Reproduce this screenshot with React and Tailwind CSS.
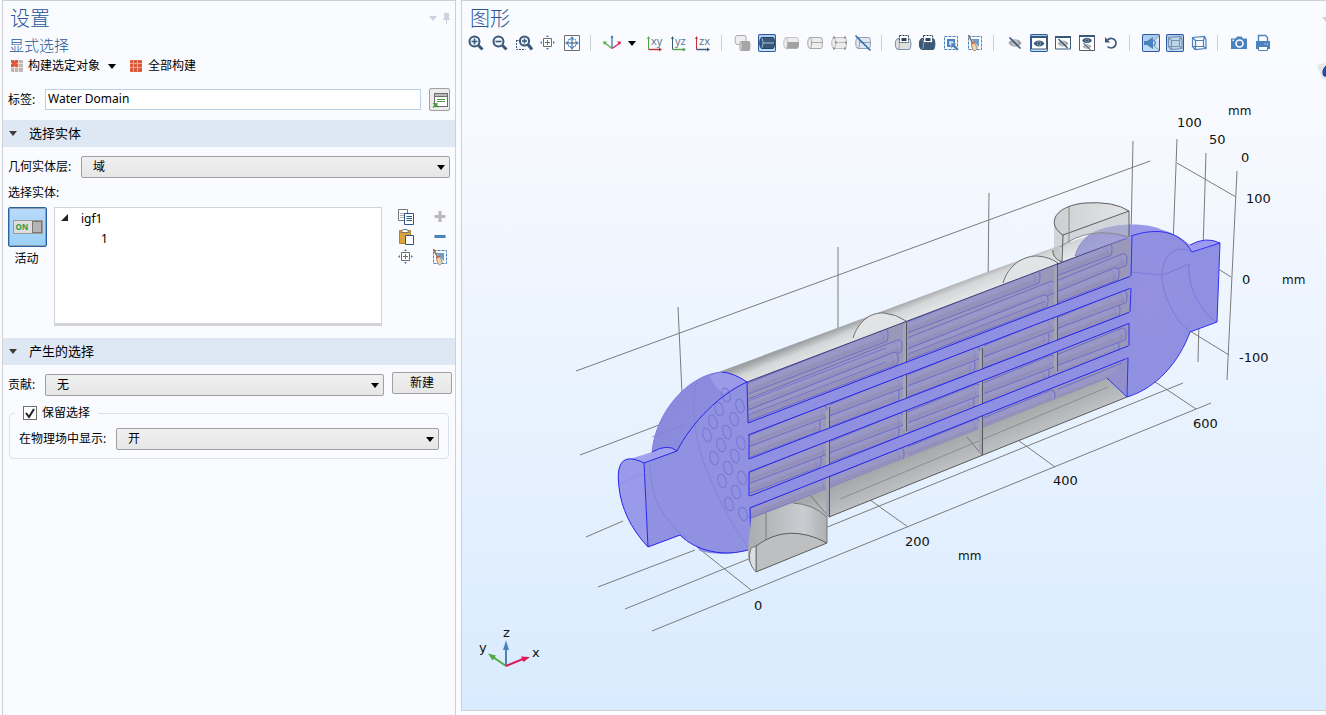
import { useState } from "react";

const NAVY = "#3a5878";
const BLUE = "#4a82bd";

function Svg({ children, size = 18, ...rest }) {
  return (
    <svg width={size} height={size} viewBox="0 0 18 18" fill="none" aria-hidden="true" {...rest}>
      {children}
    </svg>
  );
}

function Caret({ className = "text-black" }) {
  return (
    <svg width="8" height="5" viewBox="0 0 8 5" className={className} aria-hidden="true">
      <path d="M0 0h8L4 5z" fill="currentColor" />
    </svg>
  );
}

// ---------- icons ----------

function MeshIcon({ partial }) {
  return (
    <svg width="12" height="12" viewBox="0 0 12 12" aria-hidden="true">
      <rect width="12" height="12" rx="1" fill={partial ? "#b9b9b9" : "#dc5a3c"} />
      {partial && <rect width="7" height="7" fill="#e0583c" />}
      <path d="M3.500 0v12M7.500 0v12M0 3.500h12M0 7.500h12" stroke={partial ? "#f4dcd6" : "#f3a48f"} />
      {partial && <path d="M1 1h5v5H1z" fill="#e0583c" />}
    </svg>
  );
}

function GoToIcon() {
  return (
    <Svg>
      <rect x="3.500" y="2.500" width="13" height="13" fill="#fff" stroke="#6c6c6c" />
      <path d="M4 3h12v2.500H4z" fill="#b8b8b8" />
      <path d="M3.500 5.500h13" stroke="#6c6c6c" />
      <path d="M6 8.500h8M6 10.500h8" stroke="#4b9b3f" />
      <path d="M1.500 12h5v5l-2-2-2 2-1-1 2-2z" fill="#4b9b3f" />
    </Svg>
  );
}

function Lens() {
  return (
    <>
      <circle cx="7.500" cy="7.500" r="5" stroke={NAVY} strokeWidth="2" fill="#eef4fb" />
      <path d="M11.500 11.500l4 4" stroke={NAVY} strokeWidth="3" />
    </>
  );
}

const ZoomInIcon = () => (
  <Svg><Lens /><path d="M4.500 7.500h6M7.500 4.500v6" stroke={NAVY} strokeWidth="1.600" /></Svg>
);

const ZoomOutIcon = () => (
  <Svg><Lens /><path d="M4.500 7.500h6" stroke={NAVY} strokeWidth="1.600" /></Svg>
);

const ZoomBoxIcon = () => (
  <Svg>
    <path d="M1.500 6v9.500h9M1.500 6.500h3" stroke={NAVY} strokeDasharray="2 1" />
    <circle cx="9.500" cy="7" r="4.600" stroke={NAVY} strokeWidth="2" fill="#eef4fb" />
    <path d="M7 7h5M9.500 4.500v5" stroke={NAVY} strokeWidth="1.400" />
    <path d="M13 10.500l4 5" stroke={NAVY} strokeWidth="3" />
  </Svg>
);

const ZoomSelIcon = () => (
  <Svg>
    <path d="M4.500 4.500h8v8h-8z" stroke="#6e6e6e" fill="#fff" />
    <path d="M6 8.500h5M8.500 6v5" stroke="#6e6e6e" />
    <path d="M7 3l1.500-2L10 3zM7 14l1.500 2 1.500-2zM3 7L1 8.500 3 10zM14 7l2 1.500-2 1.500z" fill={BLUE} />
  </Svg>
);

const ZoomExtentsIcon = () => (
  <Svg>
    <path d="M1.500 1.500h15v15h-15z" stroke="#6e6e6e" />
    <path d="M5.500 5.500h7v7h-7z" stroke={BLUE} strokeDasharray="2 1" />
    <path d="M6 9h6M9 6v6" stroke={NAVY} />
    <path d="M7 5l2-3 2 3zM7 13l2 3 2-3zM5 7L2 9l3 2zM13 7l3 2-3 2z" fill={BLUE} />
  </Svg>
);

const AxesIcon = () => (
  <Svg>
    <path d="M9 2v12" stroke="#4a82bd" strokeWidth="1.400" />
    <path d="M7.500 4L9 1l1.500 3z" fill="#4a82bd" />
    <path d="M9 14.500L2 9" stroke="#56ae48" strokeWidth="1.400" />
    <path d="M0 7.500h4L1 11z" fill="#56ae48" />
    <path d="M9 14.500L17 9" stroke="#dd1c5b" strokeWidth="1.400" />
    <path d="M18 7.500h-4l3 3.500z" fill="#dd1c5b" />
  </Svg>
);

function PlaneIcon({ name, v, h }) {
  return (
    <Svg>
      <path d="M2.500 3v12.500" stroke={v} />
      <path d="M1 5l1.500-3L4 5z" fill={v} />
      <path d="M2.500 15.500H14" stroke={h} strokeWidth="1.400" />
      <path d="M13 13.500l3 2-3 2z" fill={h} />
      <text x="5" y="11" fontSize="11" fill="#56718f" fontFamily="Open Sans, sans-serif">{name}</text>
    </Svg>
  );
}

// small lying cylinder, the base of the rendering icons
function Barrel({ fill = "#ececec", stroke = "#a9a9a9", children }) {
  return (
    <>
      <path d="M4 3.500h11c2 0 2 11 0 11H4c-3 0-3-11 0-11z" fill={fill} stroke={stroke} />
      <path d="M4 3.500c2 0 2 11 0 11" stroke={stroke} />
      {children}
    </>
  );
}

const OverlapIcon = () => (
  <Svg>
    <path d="M3 1.500h8c1.500 0 1.500 9 0 9H3c-2.500 0-2.500-9 0-9z" fill="#eee" stroke="#a9a9a9" />
    <path d="M7 7h8c2 0 2 10 0 10H7c-2.500 0-2.500-10 0-10z" fill="#a6a6a6" />
    <ellipse cx="6.500" cy="12" rx="1.300" ry="4.500" fill="#c9c9c9" />
  </Svg>
);

const SolidIcon = () => (
  <Svg>
    <Barrel fill={NAVY} stroke="#24466e"><path d="M5 9h11" stroke="#a8c4e4" /><path d="M3.500 4c2 1 2 9 0 10" stroke="#a8c4e4" /></Barrel>
  </Svg>
);

const HalfIcon = () => (
  <Svg><Barrel stroke="#c3c3c3" /><path d="M5.500 8h11.500c0 4-.500 6.500-2 6.500H4c1.500 0 1.700-3 1.500-6.500z" fill="#a2a2a2" /></Svg>
);

const WireIcon = () => <Svg><Barrel><path d="M5.500 8.500H16" stroke="#a9a9a9" /></Barrel></Svg>;

const PointsIcon = () => (
  <Svg>
    <Barrel stroke="#bcbcbc"><path d="M5.500 8.500H16" stroke="#bcbcbc" /></Barrel>
    <path d="M3 2.500h2v2H3zM14 2.500h2v2h-2zM3 13.500h2v2H3zM14 13.500h2v2h-2zM5 7.500h2v2H5zM15 7.500h2v2h-2z" fill="#929292" />
  </Svg>
);

const NoWireIcon = () => (
  <Svg>
    <Barrel fill="#e3e7ed" stroke="#91a3ba"><path d="M5.500 8.500H16" stroke="#91a3ba" /></Barrel>
    <path d="M1.500 1.500l15 15" stroke="#2169ad" strokeWidth="1.500" />
  </Svg>
);

function PickIcon({ fill, stroke }) {
  return (
    <Svg>
      <path d="M4 4.500h11c2.500 0 2.500 11 0 11H4c-3.500 0-3.500-11 0-11z" fill={fill} stroke={stroke} />
      <path d="M4 5c2 0 2 10 0 10" stroke="#93a6bd" />
      <path d="M5.500 1.500h9v7h-9z" fill="#fff" stroke="#31455f" strokeDasharray="2 1" />
      <path d="M7.500 4h5v3h-5z" fill="#31455f" />
    </Svg>
  );
}

const SelectBoxIcon = () => (
  <Svg>
    <path d="M2.500 2.500h13v13h-13z" stroke={BLUE} strokeDasharray="3 1" />
    <path d="M6 6h6v6H6z" fill="#bcd3ea" stroke={BLUE} strokeWidth="2" />
    <path d="M9 9h6l-2 2 4 4-2 2-4-4-2 2z" fill={BLUE} stroke="#fff" strokeWidth=".500" />
  </Svg>
);

const BroomIcon = () => (
  <Svg>
    <path d="M2.500 2.500h13v13h-13z" stroke={BLUE} strokeDasharray="3 1" />
    <path d="M5 5h8v8z" fill="#6f9ccc" />
    <path d="M2.500 1l4.500 9" stroke="#8d6c4c" strokeWidth="1.600" />
    <path d="M5.500 9.500l2.500-1.500 3 5c.500 2-1 3.500-2.500 4-2-1.500-3-4-3-7.500z" fill="#f0d3ae" stroke="#977452" strokeWidth=".800" />
    <path d="M5.500 10l3-2" stroke="#cc5236" strokeWidth="1.400" />
  </Svg>
);

function Eye({ y = 9, color = NAVY, slash, s = 1 }) {
  return (
    <g transform={`translate(9 ${y}) scale(${s})`}>
      <path d="M-6 0C-3.500-4.500 3.500-4.500 6 0 3.500 4.500-3.500 4.500-6 0z" fill={color} />
      <circle r="2.400" fill="#fff" opacity=".500" />
      <circle r="1.600" fill={color} />
      {slash && <path d="M-5-5L5 5" stroke={NAVY} strokeWidth="1.500" />}
    </g>
  );
}

const HiddenIcon = () => <Svg><Eye color="#a3a7ac" slash s={1.100} /></Svg>;

function EyeWindow({ children }) {
  return (
    <Svg>
      <path d="M1.500 2.500h15v12.500h-15z" fill="#fff" stroke={NAVY} />
      <path d="M1 3h16" stroke={NAVY} strokeWidth="2" />
      {children}
    </Svg>
  );
}

const ShowOnlyIcon = () => <EyeWindow><Eye y={9.500} s={0.900} /></EyeWindow>;
const ShowHiddenIcon = () => <EyeWindow><Eye y={9.500} color="#aaa" slash s={0.900} /></EyeWindow>;
const ShowBothIcon = () => (
  <Svg>
    <path d="M1.500 1.500h15v15h-15z" fill="#fff" stroke="#5c5c66" />
    <path d="M1 2h16" stroke={NAVY} strokeWidth="2" />
    <Eye y={6.500} s={0.800} />
    <Eye y={12.500} color="#aaa" slash s={0.700} />
  </Svg>
);

const ResetIcon = () => (
  <Svg>
    <path d="M5 6.500c3.500-4 9-1.500 9 2.500 0 4.500-5 6.500-8.500 3.500" stroke={NAVY} strokeWidth="1.600" />
    <path d="M3 3v5.500h5z" fill={NAVY} />
  </Svg>
);

const LightIcon = () => (
  <Svg>
    <path d="M10 9l7-7v14z" fill="#cfe3f7" />
    <path d="M9 8.500L17 2M9 9.500l8 6.500" stroke="#9a9a9a" />
    <path d="M2 7h3l6-4v12l-6-4H2z" fill={BLUE} />
    <path d="M12 6.500c1.600 1 1.600 4 0 5" stroke={BLUE} strokeWidth="1.400" />
  </Svg>
);

function BoxIcon({ solid }) {
  return (
    <Svg>
      {solid && <path d="M3 4l11-1 2 2v9l-10 1-3-3z" fill="#c0d4ea" />}
      <path
        d="M5.500 6.500h8v6h-8zM2.500 3.500l12-1v0l1.500 3v9l-11 1-2.500-3zM2.500 3.500l3 3M14.500 2.500l-1 4M2.500 12.500l3 0M13.500 12.500l2.500 2M5.500 6.500V15"
        stroke={solid ? "#7993b2" : BLUE}
        strokeWidth="1.200"
      />
    </Svg>
  );
}

const CameraIcon = () => (
  <Svg>
    <path d="M1 4.500h4.500L7 2.500h4.500L13 4.500h4V15H1z" fill={BLUE} />
    <circle cx="9.500" cy="9.500" r="3.500" fill={BLUE} stroke="#fff" strokeWidth="1.600" />
    <path d="M2.500 5.500h1.500V7H2.500z" fill="#fff" />
  </Svg>
);

const PrinterIcon = () => (
  <Svg>
    <path d="M4.500 7V1.500h7l2 2V7" fill="#fff" stroke={BLUE} strokeWidth="1.400" />
    <path d="M2 7h14v8H2z" fill={BLUE} />
    <path d="M4.500 12.500h9v4h-9z" fill="#fff" stroke={BLUE} />
    <path d="M10.500 10h1M13 10h1" stroke="#fff" />
  </Svg>
);

const CopyIcon = () => (
  <Svg>
    <path d="M1.500 1.500h9v11h-9z" fill="#fff" stroke="#777" />
    <path d="M3 5.500h5M3 7.500h5M3 9.500h4" stroke="#aaa" />
    <path d="M7.500 5.500h9v11h-9z" fill="#fff" stroke="#2d5488" />
    <path d="M9.500 8.500H15M9.500 10.500H15M9.500 12.500H15" stroke="#2d5488" />
  </Svg>
);

const PasteIcon = () => (
  <Svg>
    <path d="M2.500 2.500h11v13h-11z" fill="#dba53e" stroke="#b5842e" />
    <path d="M4 4.500l2-3h4l2 3z" fill="#fff" stroke="#777" />
    <path d="M8.500 7.500h8v9h-8z" fill="#fff" stroke="#2d5488" />
  </Svg>
);

const PlusIcon = () => <Svg><path d="M3.500 8.500h11M9 3v11" stroke="#b9b9b9" strokeWidth="3" /></Svg>;
const MinusIcon = () => <Svg><path d="M3.500 8.500h11" stroke={BLUE} strokeWidth="3" /></Svg>;

function PinIcon() {
  return (
    <svg width="8" height="11" viewBox="0 0 8 11" aria-hidden="true">
      <path d="M1 0h5v6h1v1H4v4H3V7H0V6h1z" fill="#cdd2de" />
    </svg>
  );
}

// ---------- form parts ----------

function Select({ id, options, className = "" }) {
  return (
    <div className={`relative h-[22px] ${className}`}>
      <select
        id={id}
        className="h-full w-full appearance-none rounded-xs border border-[#a0a0a0] bg-linear-to-b from-[#f0f0f1] to-[#e6e6e6] pl-[11px] text-xs text-black"
      >
        {options.map((o) => (
          <option key={o}>{o}</option>
        ))}
      </select>
      <span className="pointer-events-none absolute inset-y-0 right-[5px] flex items-center">
        <Caret />
      </span>
    </div>
  );
}

function Section({ title, children }) {
  const [open, setOpen] = useState(true);
  return (
    <section>
      <button
        onClick={() => setOpen((prev) => !prev)}
        className="flex h-[27px] w-full items-center gap-3 bg-[#dee8f4] pl-1.5 text-left text-[13px]"
      >
        <Caret className="text-[#3c3c3c]" />
        <span>{title}</span>
      </button>
      {open && children}
    </section>
  );
}

function IconButton({ label, active, children }) {
  return (
    <button
      aria-label={label}
      className="flex h-[18px] w-6 shrink-0 items-center justify-center"
    >
      {active ? (
        <span className="flex h-[18px] w-[18px] items-center justify-center rounded-xs bg-linear-to-b from-[#a9c9ec] to-[#c4e2fb] ring-1 ring-[#2d5a9c] ring-inset">
          {children}
        </span>
      ) : (
        children
      )}
    </button>
  );
}

function Settings() {
  return (
    <aside className="w-[454px] shrink-0 border border-b-0 border-[#cfd0d6]">
      <header className="flex h-[34px] items-center justify-between pt-px pr-1 pl-[7px]">
        <h1 className="text-xl font-light text-[#2a5699]">设置</h1>
        <div className="flex items-center gap-1.5">
          <Caret className="text-[#cdd2de]" />
          <PinIcon />
        </div>
      </header>
      <h2 className="h-5 pl-1.5 text-[15px] leading-5 font-light text-[#2a5699]">显式选择</h2>

      <div className="flex h-[22px] items-center pl-2">
        <button className="flex items-center gap-[5px]">
          <MeshIcon partial />
          构建选定对象
        </button>
        <button aria-label="构建选项" className="px-2">
          <Caret />
        </button>
        <button className="ml-1.5 flex items-center gap-1.5">
          <MeshIcon />
          全部构建
        </button>
      </div>

      <div className="mt-[11px] mb-[9px] flex items-center px-[5px]">
        <label htmlFor="label" className="w-[37px] shrink-0">标签:</label>
        <input
          id="label"
          defaultValue="Water Domain"
          className="h-[21px] min-w-0 flex-1 border border-[#b9d1e6] bg-white px-[2px] pb-0.5 text-xs"
        />
        <button
          aria-label="转到源"
          className="ml-2 flex h-[23px] w-[21px] items-center justify-center rounded-xs border border-[#a0a0a0] bg-[#ececec]"
        >
          <GoToIcon />
        </button>
      </div>

      <Section title="选择实体">
        <div className="px-[5px] pt-[9px] pb-3">
          <div className="flex items-center">
            <label htmlFor="level" className="w-[73px] shrink-0">几何实体层:</label>
            <Select id="level" options={["域", "边界", "边", "点"]} className="flex-1" />
          </div>
          <p className="mt-1.5 mb-[5px] h-[18px] leading-[18px]">选择实体:</p>
          <div className="flex">
            <div className="flex w-[46px] shrink-0 flex-col">
              <button
                aria-label="活动"
                className="flex h-10 w-[39px] items-center justify-center rounded-xs border border-[#2b62a0] bg-linear-to-b from-[#b8dafa] to-[#9cd0f8] ring-1 ring-[#8d9fb3] ring-inset"
              >
                <span className="flex h-3.5 w-[30px] items-center justify-between border border-[#999] bg-[#dedede] pl-0.5 text-[8px] font-bold text-[#2f9a48]">
                  ON
                  <span className="h-full w-2.5 border border-[#777] bg-[#b4b4b4]" />
                </span>
              </button>
              <span className="w-[37px] pt-px text-center leading-[22px]">活动</span>
            </div>
            <ul className="h-[119px] flex-1 border border-b-3 border-[#d2d3d5] bg-white pt-px leading-5">
              <li className="flex items-center pl-1.5">
                <svg width="7" height="10" viewBox="0 0 7 10" aria-hidden="true">
                  <path d="M7 0v7H0z" fill="#222" />
                </svg>
                <span className="ml-[13px]">igf1</span>
              </li>
              <li className="pl-[46px]">1</li>
            </ul>
            <div className="ml-3 grid w-14 shrink-0 auto-rows-[20px] grid-cols-[34px_22px] items-center">
              <IconButton label="复制选择"><CopyIcon /></IconButton>
              <IconButton label="添加到选择"><PlusIcon /></IconButton>
              <IconButton label="粘贴选择"><PasteIcon /></IconButton>
              <IconButton label="从选择中移除"><MinusIcon /></IconButton>
              <IconButton label="缩放到选择"><ZoomSelIcon /></IconButton>
              <IconButton label="清除选择"><BroomIcon /></IconButton>
            </div>
          </div>
        </div>
      </Section>

      <Section title="产生的选择">
        <div className="pt-[7px] pr-[3px] pl-[5px]">
          <div className="flex">
            <label htmlFor="contrib" className="w-[37px] shrink-0 pt-[5px]">贡献:</label>
            <Select id="contrib" options={["无"]} className="mt-0.5 flex-1" />
            <button className="ml-2 h-[22px] w-[60px] rounded-xs border border-[#a0a0a0] bg-linear-to-b from-[#f0f0f1] to-[#e6e6e6]">
              新建
            </button>
          </div>
          <fieldset className="mt-[7px] mr-[3px] ml-px rounded-sm border border-[#d8e2ea] px-[9px] pb-2">
            <legend className="-ml-1 flex h-5 items-center px-2">
              <label className="flex items-center gap-[5px]">
                <input type="checkbox" defaultChecked className="peer sr-only" />
                <span className="flex h-3.5 w-3.5 items-center justify-center border border-[#6e6e6e] bg-white text-transparent peer-checked:text-[#222]">
                  <svg width="12" height="12" viewBox="0 0 12 12" aria-hidden="true">
                    <path d="M2 6l3 4 5-8" fill="none" stroke="currentColor" strokeWidth="2" />
                  </svg>
                </span>
                保留选择
              </label>
            </legend>
            <div className="flex items-center pt-[5px]">
              <label htmlFor="physics" className="w-[97px] shrink-0">在物理场中显示:</label>
              <Select id="physics" options={["开", "关"]} className="flex-1" />
            </div>
          </fieldset>
        </div>
      </Section>
    </aside>
  );
}

// ---------- toolbar ----------

const RED = "#c33131";
const GREEN = "#4ea842";

const TOOLS = [
  ["放大", ZoomInIcon],
  ["缩小", ZoomOutIcon],
  ["缩放框", ZoomBoxIcon],
  ["缩放到选择", ZoomSelIcon],
  ["缩放到窗口大小", ZoomExtentsIcon],
  "|",
  ["默认视图", AxesIcon],
  "v",
  ["xy", () => <PlaneIcon name="xy" v={GREEN} h={RED} />],
  ["yz", () => <PlaneIcon name="yz" v={NAVY} h={GREEN} />],
  ["zx", () => <PlaneIcon name="zx" v={RED} h={NAVY} />],
  "|",
  ["选择对象", OverlapIcon],
  ["选择域", SolidIcon, true],
  ["选择边界", HalfIcon],
  ["选择边", WireIcon],
  ["选择点", PointsIcon],
  ["不选择", NoWireIcon],
  "|",
  ["框选", () => <PickIcon fill="#dfdfdf" stroke="#7b90aa" />],
  ["取消框选", () => <PickIcon fill={NAVY} stroke={NAVY} />],
  ["选择框", SelectBoxIcon],
  ["清除选择", BroomIcon],
  "|",
  ["隐藏", HiddenIcon],
  ["仅显示可见", ShowOnlyIcon, true],
  ["仅显示隐藏", ShowHiddenIcon],
  ["全部显示", ShowBothIcon],
  ["重置隐藏", ResetIcon],
  "|",
  ["场景光", LightIcon, true],
  ["透明", () => <BoxIcon solid />, true],
  ["线框", () => <BoxIcon />],
  "|",
  ["快照", CameraIcon],
  ["打印", PrinterIcon],
];

function Toolbar() {
  return (
    <div className="mb-px flex h-6 items-center pl-0.5">
      {TOOLS.map((tool, i) => {
        if (tool === "|")
          return (
            <span key={i} className="flex w-4 shrink-0 justify-center pr-1">
              <span className="h-4 w-px bg-[#cdd0d6]" />
            </span>
          );
        if (tool === "v")
          return (
            <button key={i} aria-label="视图选项" className="flex w-[19px] shrink-0 justify-center pr-1">
              <Caret />
            </button>
          );
        const [label, Icon, active] = tool;
        return (
          <IconButton key={i} label={label} active={active}>
            <Icon />
          </IconButton>
        );
      })}
    </div>
  );
}

// ---------- model ----------

const SLOPE = 0.383;
const BAFFLES = [
  [829, 407, 517],
  [906, 321, 431],
  [982, 348, 455],
  [1057, 263, 371],
];

// cut tubes: left top, left bottom, right top, right bottom
const BARS = [
  [748, 423, 435, 1131, 276, 288],
  [749, 459, 472, 1130, 312, 323],
  [750, 496, 508, 1128, 346, 358],
];

// tube rows behind the cut plane: start x, end x, axis height at x=748
const TUBES = [
  [748, 886, 388], [748, 900, 404], [748, 896, 415],
  [908, 1038, 388], [908, 1053, 404], [908, 1046, 415],
  [1058, 1110, 388], [1058, 1125, 404], [1058, 1117, 415],
  [750, 818, 452], [750, 825, 441], [830, 897, 452], [830, 902, 441],
  [908, 973, 452], [908, 978, 441], [984, 1047, 452], [984, 1053, 441],
  [1058, 1118, 452], [1058, 1125, 441],
  [750, 819, 488], [750, 826, 478], [830, 897, 488], [830, 902, 478],
  [908, 972, 488], [908, 978, 478], [984, 1047, 488], [984, 1053, 478],
  [1058, 1117, 488], [1058, 1124, 478],
  [750, 826, 513], [830, 902, 513], [908, 978, 513], [984, 1053, 513], [1058, 1124, 513],
];

const HOLES = [
  [726, 395], [740, 406], [719, 409], [734, 419], [713, 422], [727, 432],
  [741, 443], [707, 435], [721, 445], [735, 456], [714, 458], [728, 468],
  [742, 478], [722, 481], [736, 492], [729, 504], [743, 514],
];

const GRID = [
  "M576 371L1150 161", "M678 307L680 350L682 393",
  "M838 247V328", "M989 193L988 290", "M1133 141L1131 236",
  "M580 455L659 425", "M586 537L623 521", "M598 587L695 550",
  "M625 609L1183 383", "M652 631L1211 403",
  "M697 547L751 590", "M852 487L908 527", "M1000 427L1055 467", "M1138 371L1166 389L1196 409",
  "M1177 139L1173 245", "M1177 163L1236 197", "M1206 153L1203 250",
  "M1237 171L1227 380", "M1190 251L1231 277", "M1185 328L1229 355", "M1199 320L1198 362",
];

const TICKS = [
  [1177, 127, "100"], [1209, 144, "50"], [1241, 162, "0"],
  [1246, 203, "100"], [1242, 284, "0"], [1239, 362, "-100"],
  [1193, 428, "600"], [1053, 485, "400"], [905, 546, "200"], [754, 610, "0"],
];

function Tube({ x0, x1, c }) {
  const y0 = c - SLOPE * (x0 - 748);
  const y1 = c - SLOPE * (x1 - 748);
  return (
    <g>
      <path
        d={`M${x0} ${y0 - 5}L${x1 - 2} ${y1 - 6}q4 0 4 5t-1 7L${x0} ${y0 + 6}z`}
        fill="#9997c6"
      />
      <path d={`M${x0} ${y0 + 3}L${x1} ${y1 + 3}`} stroke="#8f8db2" strokeWidth="4" opacity=".6" />
      <path
        d={`M${x0} ${y0 - 5}L${x1 - 2} ${y1 - 6}q4 0 4 5t-1 7L${x0} ${y0 + 6}`}
        stroke="#6664ca"
        opacity=".85"
      />
      <path d={`M${x1 - 6} ${y1 - 4}q4 3 3 11`} stroke="#8583c4" opacity=".5" />
    </g>
  );
}

function Model() {
  return (
    <g fill="none" strokeWidth="1">
      {/* shell, upper surface */}
      <path d="M713 374L840 327L987 272L1047 250L1100 232L1131 236L747 382L733 374z" fill="url(#shell)" />
      <path d="M853 338C858 322 870 312 884 313Q896 314 906 321" fill="#e2e3e4" stroke="#707070" />
      <path d="M1003 283C1008 266 1022 256 1037 256Q1050 257 1058 263" fill="#e2e3e4" stroke="#707070" />
      {/* shell, lower inside */}
      <path d="M750 517L1107 378L1127 397L829 517L751 549z" fill="url(#floor)" />
      <path d="M810 495L829 517M967 437L982 455" stroke="#777" />
      <path d="M840 499L1108 387" stroke="#8b8d8f" />
      <path d="M829 517L1127 397" stroke="#5a5a5a" />

      {/* cut plane */}
      <path d="M747 382L1132 236L1129 370L750 519z" fill="#9a98b9" />
      <g clipPath="url(#cut)">
        {TUBES.map(([x0, x1, c]) => (
          <Tube key={`${x0}-${c}`} x0={x0} x1={x1} c={c} />
        ))}
        <path d="M748 415L886 362M748 401L886 348M908 354L1046 301" stroke="#7775c6" />
      </g>
      {BAFFLES.map(([x, top, bottom]) => (
        <g key={x}>
          <path d={`M${x - 3} ${top + 4}L${x} ${top}V${bottom}L${x - 3} ${bottom - 3}z`} fill="#a5a5b8" />
          <path d={`M${x + 0.5} ${top}V${bottom}`} stroke="#55555f" />
        </g>
      ))}
      <path d="M747 382L1060 263L1132 236" stroke="#3b3b78" />

      {/* dome behind the upper nozzle */}
      <path d="M1075 256C1079 242 1088 234 1100 230Q1116 225 1132 225V237z" fill="#8c8bd0" opacity=".75" stroke="#7676cc" />

      {BARS.map(([xl, a, b, xr, c, d]) => (
        <g key={a}>
          <path d={`M${xl - 2} ${a}L${xr + 2} ${c}V${d}L${xl - 2} ${b}z`} fill="#8f90e2" />
          <path d={`M${xl} ${a}L${xr} ${c}M${xl} ${b}L${xr} ${d}`} stroke="#2525ee" />
        </g>
      ))}

      {/* left head */}
      <path d="M747 382Q734 373 722 372C690 374 656 410 652 452Q656 490 676 520L700 551Q724 558 751 549L748 435z" fill="url(#dome)" />
      <path d="M747 382C720 394 692 422 677 451L680 535C696 551 724 558 751 549z" fill="#9091e1" />
      <path d="M722 372Q735 373 747 382Q733 388 723 394Q712 384 710 376z" fill="#a3a4f0" opacity=".6" />
      <path d="M630 459L652 452Q668 443 677 451L644 463Q637 459 630 459z" fill="#a1a1ee" />
      <path d="M644 463L677 451L681 535L648 547z" fill="#9091e1" />
      <path d="M644 463C622 452 616 464 619 487C621 508 631 529 648 547z" fill="#9a9aea" stroke="#2525ee" />
      <path d="M697 381C689 410 697 450 709 475Q724 515 748 547M650 465Q650 510 686 538M652 437L684 425" stroke="#7f7fd6" opacity=".8" />
      <path d="M619 484L645 473" stroke="#8a8ada" opacity=".6" />
      {HOLES.map(([x, y]) => (
        <ellipse key={`${x}${y}`} cx={x} cy={y} rx="4" ry="7" transform={`rotate(-16 ${x} ${y})`} stroke="#7777d4" />
      ))}
      <path
        d="M644 463L677 451C692 422 720 394 747 382Q734 373 722 372M652 452Q668 443 677 451M648 547L680 535C696 551 724 558 751 549M747 382L748 423M749 435V459M749 472V496M750 508L751 549"
        stroke="#2525ee"
      />
      <path d="M722 372C690 374 656 410 652 452" stroke="#7c7ce0" />

      {/* right head */}
      <path d="M1098 230C1120 223 1145 223 1160 229Q1178 234 1190 245L1192 252L1132 240z" fill="#9999e8" />
      <path d="M1131 236C1158 227 1180 231 1192 252L1220 243L1217 322L1190 332C1179 362 1157 388 1127 397z" fill="url(#head)" />
      <path d="M1107 378L1127 358V397z" fill="#9291cc" />
      <path d="M1190 245Q1206 236 1220 243L1192 252z" fill="#9b9bf0" />
      <path d="M1192 252C1174 242 1161 259 1162 277C1163 297 1176 321 1190 332M1189 264C1187 289 1203 314 1217 322M1131 272L1163 275L1189 264" stroke="#7373d6" opacity=".75" />
      <path
        d="M1131 236C1158 227 1180 231 1192 252L1220 243L1217 322L1190 332C1179 362 1157 388 1127 397L1107 378M1190 245Q1206 236 1220 243M1132 236L1131 276M1131 288L1130 312M1129 323L1129 346M1128 358L1127 397"
        stroke="#3030f0"
      />

      {/* upper nozzle */}
      <path d="M1063 235C1046 224 1054 206 1085 203Q1114 201 1129 211V237Q1090 225 1060 247L1062 262L1054 256V223z" fill="#b8b9bb" opacity=".55" />
      <path d="M1063 235C1046 224 1054 206 1085 203Q1114 201 1129 211z" fill="url(#rim)" opacity=".8" />
      <path d="M1063 235C1046 224 1054 206 1085 203Q1114 201 1129 211zM1129 211V237M1063 235L1062 262Q1052 258 1053 250" stroke="#5d5d5d" />
      <path d="M1060 247Q1090 225 1129 237M1069 207V243" stroke="#8a8a8a" />

      {/* lower nozzle */}
      <path d="M751 519L793 503Q813 504 827 517V543L756 572L748 560V549z" fill="url(#pipe)" />
      <path d="M756 546Q788 522 827 543L756 572z" fill="#bdbfc1" stroke="#5d5d5d" />
      <path d="M751 548Q746 562 756 572V546z" fill="#dcdedf" stroke="#777" />
      <path d="M766 513V540M793 503Q813 504 827 517V543" stroke="#777" />
    </g>
  );
}

function Triad() {
  return (
    <g strokeWidth="2">
      <path d="M506 666V649" stroke="#4a82bd" />
      <path d="M503 650L506 640.500L509 650z" fill="#4a82bd" />
      <path d="M506 666L493 657" stroke="#51a845" />
      <path d="M488 653.500L496 655.500L492.500 660.500z" fill="#51a845" />
      <path d="M506 666L523 659" stroke="#dc1b5b" />
      <path d="M530 657L523.500 662L521 656.500z" fill="#dc1b5b" />
      <g fontSize="13" fill="#111">
        <text x="503" y="637">z</text>
        <text x="479" y="652">y</text>
        <text x="532" y="657">x</text>
      </g>
    </g>
  );
}

function Scene() {
  return (
    <svg
      viewBox="462 56 864 654"
      className="block h-full w-full"
      fontFamily="DejaVu Sans, sans-serif"
      role="img"
      aria-label="几何模型"
    >
      <defs>
        <clipPath id="cut">
          <path d="M747 382L1132 236L1129 370L750 519z" />
        </clipPath>
        <linearGradient id="shell" gradientUnits="userSpaceOnUse" x1="900" y1="303" x2="908" y2="323">
          <stop offset="0" stopColor="#9ea1a4" />
          <stop offset=".4" stopColor="#d5d6d7" />
          <stop offset="1" stopColor="#e6e7e8" />
        </linearGradient>
        <linearGradient id="floor" gradientUnits="userSpaceOnUse" x1="960" y1="434" x2="971" y2="461">
          <stop offset="0" stopColor="#a4a6a8" />
          <stop offset="1" stopColor="#bfc2c4" />
        </linearGradient>
        <linearGradient id="dome" x1="0" y1="0" x2="1" y2="1">
          <stop offset="0" stopColor="#8989da" />
          <stop offset="1" stopColor="#9292e6" />
        </linearGradient>
        <radialGradient id="head" cx=".25" cy=".4" r=".5">
          <stop offset="0" stopColor="#9690de" />
          <stop offset="1" stopColor="#8f90e2" />
        </radialGradient>
        <linearGradient id="rim">
          <stop offset="0" stopColor="#cccdcf" />
          <stop offset="1" stopColor="#e8e9ea" />
        </linearGradient>
        <linearGradient id="pipe">
          <stop offset="0" stopColor="#a9acae" />
          <stop offset=".7" stopColor="#c9cdd1" />
          <stop offset="1" stopColor="#adb0b2" />
        </linearGradient>
      </defs>
      {GRID.map((d) => (
        <path key={d} d={d} fill="none" stroke="#7b7b7b" />
      ))}
      <Model />
      <g fontSize="13" fill="#111">
        {TICKS.map(([x, y, t]) => (
          <text key={`${x}-${y}`} x={x} y={y}>{t}</text>
        ))}
      </g>
      <g fontSize="12" fill="#111">
        <text x="1228" y="115">mm</text>
        <text x="1282" y="284">mm</text>
        <text x="958" y="560">mm</text>
      </g>
      <Triad />
      <path d="M1317 65l9-2v17l-4-2z" fill="#e6e6e8" />
      <path d="M1326 66q-5 5-2 10h2z" fill="#1d55b8" stroke="#123a85" />
    </svg>
  );
}

function Graphics() {
  return (
    <main className="mb-1 flex min-w-0 flex-1 flex-col border border-r-0 border-[#cfd0d6]">
      <header className="flex h-[30px] items-end justify-between overflow-hidden pl-2">
        <h1 className="text-xl leading-6 font-light text-[#2a5699]">图形</h1>
        <span className="-mr-1 flex h-6 shrink-0 items-center">
          <Caret className="text-[#cdd2de]" />
        </span>
      </header>
      <Toolbar />
      <div className="min-h-0 flex-1 bg-linear-to-b from-[#fafbff] to-[#d9ebfe]">
        <Scene />
      </div>
    </main>
  );
}

export default function App() {
  return (
    <div className="flex h-screen gap-[5px] overflow-hidden bg-[#fafbff] pl-0.5 font-['Noto_Sans','Noto_Sans_CJK_SC',sans-serif] text-xs text-black">
      <Settings />
      <Graphics />
    </div>
  );
}
